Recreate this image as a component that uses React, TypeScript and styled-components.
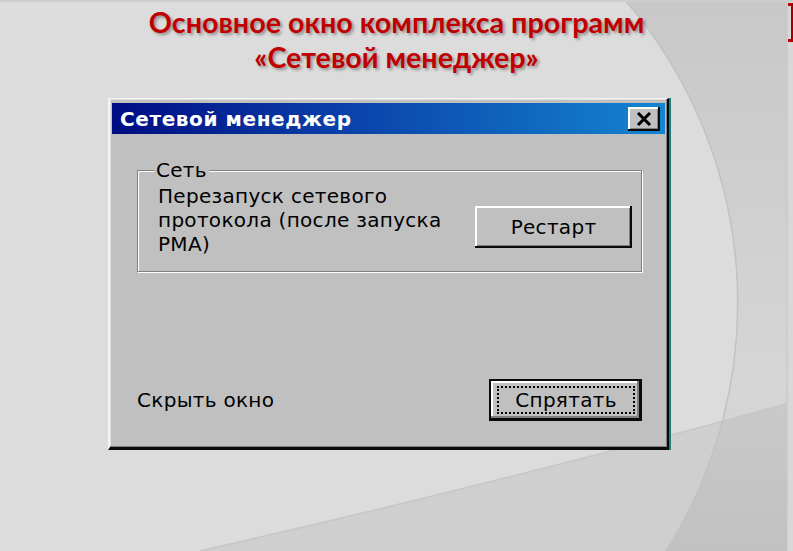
import React from 'react';
import styled, { createGlobalStyle } from 'styled-components';

const C = {
  slide: '#dcdcdc',
  red: '#c00000',
  face: '#c0c0c0',
  light: '#ffffff',
  shade: '#808080',
  dark: '#0a0a0a',
  teal: '#1a7f7f',
} as const;

const UI_FONT = '"DejaVu Sans", "Liberation Sans", sans-serif';

const Global = createGlobalStyle`
  html, body {
    margin: 0;
    padding: 0;
    background: ${C.slide};
  }
  #root {
    width: 793px;
    height: 551px;
  }
`;

const Slide = styled.div`
  position: relative;
  width: 793px;
  height: 551px;
  overflow: hidden;
  background: ${C.slide};
`;

const Backdrop = styled.svg`
  position: absolute;
  inset: 0;
  z-index: 0;
`;

const Content = styled.div`
  position: relative;
  z-index: 1;
  display: flex;
  flex-direction: column;
`;

const Heading = styled.h1`
  margin: 0;
  padding-top: 5px;
  text-align: center;
  font-family: Lato, "Open Sans", sans-serif;
  font-weight: 700;
  font-size: 28.7px;
  line-height: 35px;
  color: ${C.red};
  text-shadow: 2px 2px 3px rgba(0, 0, 0, 0.35);
`;

const Window = styled.div`
  box-sizing: border-box;
  margin: 23px 0 0 108px;
  width: 561px;
  height: 352px;
  display: flex;
  flex-direction: column;
  padding: 4px 2px 0 2px;
  background: ${C.face};
  border-style: solid;
  border-width: 1px 2px 3px 2px;
  border-color: #f4f4f4 ${C.dark} ${C.dark} #f4f4f4;
  box-shadow: inset -1px -1px 0 ${C.shade}, inset 1px 1px 0 #dfdfdf, 2px 0 0 ${C.teal};
`;

const TitleBar = styled.div`
  height: 31px;
  flex: none;
  display: flex;
  align-items: center;
  justify-content: space-between;
  padding: 0 5px 0 8px;
  background: linear-gradient(90deg, #000c82 0%, #0a3fa8 40%, #1484d0 100%);
`;

const TitleText = styled.span`
  font-family: ${UI_FONT};
  font-weight: 700;
  font-size: 20px;
  color: #fff;
  letter-spacing: 0.6px;
`;

const CloseButton = styled.button`
  width: 32px;
  height: 24px;
  padding: 0;
  border: none;
  background: ${C.face};
  display: grid;
  place-items: center;
  box-shadow: inset -2px -2px 0 ${C.dark}, inset 2px 2px 0 ${C.light}, inset -3px -3px 0 ${C.shade};
`;

const Client = styled.div`
  flex: 1;
  display: flex;
  flex-direction: column;
  padding: 26px 23px 26px 25px;
  font-family: ${UI_FONT};
  font-size: 20px;
  letter-spacing: 0.3px;
  color: #000;
`;

const Group = styled.fieldset`
  margin: 0;
  padding: 4px 9px 15px 20px;
  border: 1px solid ${C.shade};
  box-shadow: inset 1px 1px 0 ${C.light}, 1px 1px 0 ${C.light};
`;

const Legend = styled.legend`
  margin-left: -4px;
  padding: 0 2px;
  line-height: 20px;
  background: ${C.face};
`;

const GroupBody = styled.div`
  display: flex;
  justify-content: space-between;
  align-items: flex-start;
`;

const Desc = styled.div`
  line-height: 24px;
`;

const Button = styled.button<{ $default?: boolean; $w: number }>`
  position: relative;
  width: ${({ $w }) => $w}px;
  height: 42px;
  padding: 0;
  font-family: ${UI_FONT};
  font-size: 20px;
  letter-spacing: 0.3px;
  color: #000;
  background: ${C.face};
  border: ${({ $default }) => ($default ? `2px solid ${C.dark}` : 'none')};
  border-width: ${({ $default }) => ($default ? '2px 3px 3px 2px' : '0')};
  box-shadow: ${({ $default }) =>
    $default
      ? `inset -2px -2px 0 ${C.shade}, inset 2px 2px 0 ${C.light}`
      : `inset -2px -2px 0 ${C.dark}, inset 2px 2px 0 ${C.light}, inset -3px -3px 0 ${C.shade}`};
`;

const RestartButton = styled(Button)`
  margin-top: 22px;
`;

const FocusRing = styled.span`
  display: flex;
  align-items: center;
  justify-content: center;
  margin: 5px 4px 4px 6px;
  height: calc(100% - 9px);
  box-sizing: border-box;
  border: 2px dotted #000;
`;

const Footer = styled.div`
  margin-top: auto;
  display: flex;
  align-items: center;
  justify-content: space-between;
`;

function SlideArt() {
  return (
    <Backdrop width="793" height="551" viewBox="0 0 793 551">
      <defs>
        <linearGradient id="rightFill" x1="0" y1="0" x2="0" y2="1">
          <stop offset="0" stopColor="#c8c8c8" />
          <stop offset="0.7" stopColor="#d6d6d6" />
          <stop offset="1" stopColor="#cdcdcd" />
        </linearGradient>
      </defs>
      <rect x="0" y="0" width="793" height="551" fill={C.slide} />
      <path d="M625,0 A464,464 0 0,1 666,551 L793,551 L793,0 Z" fill="url(#rightFill)" />
      <path d="M200,551 Q520,478 793,402 L793,551 Z" fill="rgba(0,0,0,0.055)" />
      <path d="M625,0 A464,464 0 0,1 666,551" fill="none" stroke="#c2c2c2" strokeWidth="1.5" />
      <path d="M200,551 Q520,478 793,402" fill="none" stroke="#c6c6c6" strokeWidth="1.5" />
      <rect x="787" y="0" width="6" height="551" fill="#d8d8d8" />
      <line x1="787" y1="0" x2="787" y2="551" stroke="#c4c4c4" strokeWidth="1" />
      <rect x="0" y="0" width="793" height="2" fill="#cdcdcd" />
      <path d="M788,3 H793 V42 H788 V39 H791 V6 H788 Z" fill={C.red} />
      <rect x="791" y="3" width="2" height="39" fill="#a00000" />
    </Backdrop>
  );
}

export default function App() {
  return (
    <>
      <Global />
      <Slide>
        <SlideArt />
        <Content>
          <Heading>
            Основное окно комплекса программ
            <br />
            «Сетевой менеджер»
          </Heading>

          <Window>
            <TitleBar>
              <TitleText>Сетевой менеджер</TitleText>
              <CloseButton aria-label="Закрыть">
                <svg width="18" height="14" viewBox="0 0 18 14">
                  <path d="M3,1 L15,13 M15,1 L3,13" stroke="#000" strokeWidth="3" />
                </svg>
              </CloseButton>
            </TitleBar>

            <Client>
              <Group>
                <Legend>Сеть</Legend>
                <GroupBody>
                  <Desc>
                    Перезапуск сетевого
                    <br />
                    протокола (после запуска
                    <br />
                    РМА)
                  </Desc>
                  <RestartButton $w={157}>Рестарт</RestartButton>
                </GroupBody>
              </Group>

              <Footer>
                <span>Скрыть окно</span>
                <Button $default $w={153}>
                  <FocusRing>Спрятать</FocusRing>
                </Button>
              </Footer>
            </Client>
          </Window>
        </Content>
      </Slide>
    </>
  );
}
